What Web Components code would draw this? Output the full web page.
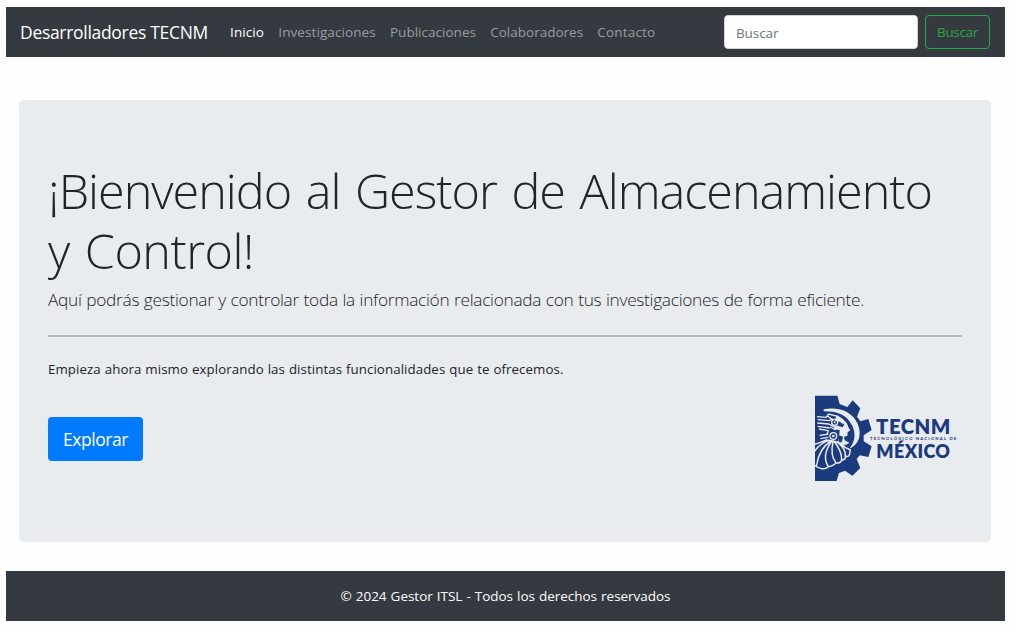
<!DOCTYPE html>
<html lang="es">
<head>
<meta charset="utf-8">
<title>Desarrolladores TECNM</title>
<style>
body{margin:0;background:#fefefe;color:#212529;font-family:"Open Sans","Noto Sans",sans-serif;font-size:14px;overflow:hidden}
</style>
</head>
<body>
<app-page>
  <site-navbar slot="header">
    <span slot="brand"><fit-label width="188">Desarrolladores TECNM</fit-label></span>
    <nav-item active><fit-label width="34">Inicio</fit-label></nav-item>
    <nav-item><fit-label width="97.5">Investigaciones</fit-label></nav-item>
    <nav-item><fit-label width="86">Publicaciones</fit-label></nav-item>
    <nav-item><fit-label width="93">Colaboradores</fit-label></nav-item>
    <nav-item><fit-label width="58">Contacto</fit-label></nav-item>
    <search-form slot="search"></search-form>
  </site-navbar>
  <welcome-hero>
    <span slot="title"><fit-label width="884">¡Bienvenido al Gestor de Almacenamiento</fit-label><br><fit-label width="206">y Control!</fit-label></span>
    <fit-label slot="lead" width="816">Aquí podrás gestionar y controlar toda la información relacionada con tus investigaciones de forma eficiente.</fit-label>
    <fit-label slot="text" width="515.5">Empieza ahora mismo explorando las distintas funcionalidades que te ofrecemos.</fit-label>
    <primary-button slot="action"><fit-label width="65">Explorar</fit-label></primary-button>
    <tecnm-logo slot="logo"></tecnm-logo>
  </welcome-hero>
  <site-footer slot="footer"><fit-label width="330">© 2024 Gestor ITSL - Todos los derechos reservados</fit-label></site-footer>
</app-page>
<script>
const define = (name, html, ready) => customElements.define(name, class extends HTMLElement {
  constructor() {
    super();
    this.attachShadow({ mode: 'open' }).innerHTML = html;
  }
  connectedCallback() { if (ready) ready.call(this); }
});

define('app-page', `
<style>
:host{display:flex;flex-direction:column;box-sizing:border-box;width:1016px;height:633px;padding:7px 11px 12px 6px}
main{flex:1;padding:43px 14px 29px 13px;display:flex}
</style>
<slot name="header"></slot><main><slot></slot></main><slot name="footer"></slot>`);

define('site-navbar', `
<style>
:host{display:flex;align-items:center;box-sizing:border-box;height:50px;padding:0 15px 0 14px;background:#343a40;color:#fff}
.brand{font-size:17.5px;line-height:27px;margin-right:15px}
nav{display:flex;flex:1}
</style>
<div class="brand"><slot name="brand"></slot></div><nav><slot></slot></nav><slot name="search"></slot>`);

define('nav-item', `
<style>
:host{display:block;padding:0 7.1px;font-size:13.5px;line-height:22px;color:#999c9f}
:host([active]){color:#fff}
</style><slot></slot>`);

define('search-form', `
<style>
:host{display:flex;gap:7px}
input{box-sizing:border-box;width:194px;height:34px;margin:0;padding:2px 11px 0;border:1px solid #ced4da;border-radius:4px;background:#fff;font:13.5px "Open Sans","Noto Sans",sans-serif;letter-spacing:-.1px;outline:0}
input::placeholder{color:#6c757d;opacity:1}
button{box-sizing:border-box;width:65px;height:34px;margin:0;padding:0;border:1px solid #28a745;border-radius:4px;background:transparent;color:#28a745;font:13.5px "Open Sans","Noto Sans",sans-serif}
</style>
<input type="text" placeholder="Buscar"><button type="button"><fit-label width="41">Buscar</fit-label></button>`);

define('welcome-hero', `
<style>
:host{flex:1;display:block;box-sizing:border-box;padding:60px 29px 0;border-radius:5px;background:#e9ecef}
h1{margin:0;font-size:48.5px;font-weight:300;line-height:60px;word-spacing:3px}
.lead{margin:6px 0 0;font-size:17.3px;font-weight:300;line-height:27px;word-spacing:.5px}
hr{margin:22px 0 21px;border:0;height:2px;background:#b4b8bb}
.text{margin:0;font-size:13.3px;line-height:22px;word-spacing:.4px}
.row{display:flex;justify-content:space-between;padding:15px 5px 0 0}
.action{padding-top:22px}
</style>
<h1><slot name="title"></slot></h1>
<p class="lead"><slot name="lead"></slot></p>
<hr>
<p class="text"><slot name="text"></slot></p>
<div class="row"><div class="action"><slot name="action"></slot></div><slot name="logo"></slot></div>`);

define('primary-button', `
<style>
:host{display:flex;align-items:center;justify-content:center;width:95px;height:44px;border-radius:4px;background:#007bff;color:#fff;font-size:17.5px;line-height:27px}
</style><slot></slot>`);

define('site-footer', `
<style>
:host{display:flex;align-items:center;justify-content:center;height:50px;background:#343a40;color:#fff;font-size:13.5px;line-height:22px;word-spacing:.6px}
</style><slot></slot>`);

define('tecnm-logo', `
<style>
:host{display:block;width:144px;height:87px}
svg{display:block;overflow:visible}
text{font-family:Lato,"Open Sans",sans-serif;font-weight:800;fill:#1c3a7e}
</style>
<svg width="144" height="87" viewBox="41 30 432 261" role="img" aria-label="TECNM">
  <path fill="#1c3a7e" d="M47 32h67l7 25 23 9 16-20 23 24-10 25 10 14 24-7 10 33-24 16v18l24 15-10 32-26-5-9 11 11 27-24 23-22-15-18 7-7 24H47z"/>
  <g fill="#e9ecef">
    <path d="M73 73C116 64 158 78 175 116c14 34 3 63-25 75 18-21 20-47 8-70C143 91 116 78 73 79z"/>
    <path d="M111 91c19 8 34 22 36 36l6 9-8 6-1 11-10 2 2 11 14 7c-9 9-25 10-35 2l4-16 2-23-17-4 2-8 19-3-1-10-17-4z"/>
  </g>
  <g fill="none" stroke="#e9ecef" stroke-width="4">
    <path d="M53 95l27 2 8-10 30 8M55 104l35 3 10-6M54 114l34 3 22 11M55 124l36 5M59 132l28 5-5 13M61 151l26-4M63 161l24-4M83 92l18 13M92 126l18 9"/>
    <circle cx="106" cy="112" r="9"/><circle cx="102" cy="153" r="10"/>
  </g>
  <circle cx="106" cy="112" r="3" fill="#e9ecef"/><circle cx="102" cy="153" r="4" fill="#e9ecef"/>
  <path fill="#1c3a7e" d="M119 112l16 6-5 9-13-4zM119 151l12 4-3 15-10 5z"/>
  <g fill="none" stroke="#e9ecef" stroke-width="4.5" stroke-linecap="round">
    <path d="M45 179l36-14 17 2 20 5 21 16 14 7M92 166c-20 4-36 18-47 34M95 168c-25 16-38 38-43 72M97 169c-20 27-25 52-10 76M101 170c-6 28-4 49 9 63M104 169c14 17 24 33 23 57M110 170c19 11 29 23 28 43M45 240c14 13 32 15 42 5 11-1 18-5 23-12 8 2 15-1 17-7 7-1 12-5 11-13 9 5 13 0 15-18"/>
  </g>
  <text x="230" y="147" font-size="61" textLength="223" lengthAdjust="spacing">TECNM</text>
  <text x="212" y="165" font-size="13" textLength="259" lengthAdjust="spacing" style="font-weight:700">TECNOLÓGICO NACIONAL DE</text>
  <text x="231" y="219" font-size="54" textLength="221" lengthAdjust="spacing">MÉXICO</text>
</svg>`);

// Keeps a label at a fixed width by spreading the difference over its letters.
define('fit-label', `
<style>:host{display:inline-block;white-space:nowrap}span{display:inline-block}</style><span><slot></slot></span>`, function () {
  const span = this.shadowRoot.querySelector('span');
  const width = +this.getAttribute('width');
  const natural = span.getBoundingClientRect().width;
  this.style.width = width + 'px';
  span.style.letterSpacing = (width - natural) / this.textContent.length + 'px';
});
</script>
</body>
</html>
